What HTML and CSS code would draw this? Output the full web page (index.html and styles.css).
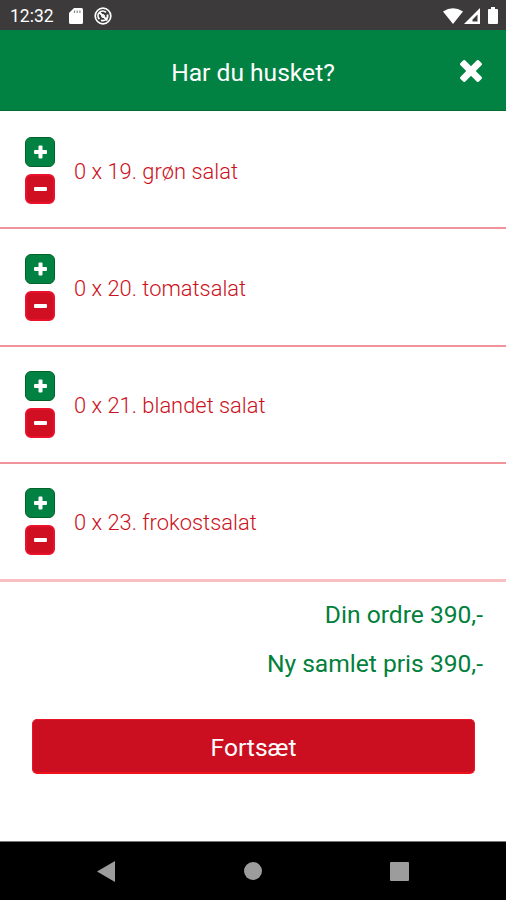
FILE: index.html
```html
<!DOCTYPE html>
<html lang="da">
<head>
    <meta charset="UTF-8">
    <meta name="viewport" content="width=device-width, initial-scale=1.0">
    <title>Har du husket?</title>
    <link rel="stylesheet" href="styles.css">
</head>
<body>
    <!-- Status bar -->
    <div class="status-bar">
        <span class="clock">12:32</span>
        <svg class="sd-icon" width="14" height="16" viewBox="0 0 14 16">
            <path fill="#fff" d="M5 0h7.5Q14 0 14 1.5v13q0 1.5-1.5 1.5h-11Q0 16 0 14.5V5z"/>
            <path stroke="#888" stroke-width="1.2" d="M5.5 2.5v2.500M8.200 2.500v2.500M10.900 2.500v2.500"/>
        </svg>
        <svg class="sync-icon" width="18" height="18" viewBox="0 0 18 18" fill="none" stroke="#fff">
            <circle cx="9" cy="9" r="7.800" stroke-width="1.700"/>
            <path stroke-width="1.800" d="M5.500 12.200A4.700 4.700 0 0 1 12 5.400M13.400 7.500A4.700 4.700 0 0 1 7 13.200M6 6l7.500 7.500"/>
            <circle cx="9" cy="9" r="1.500" stroke-width="1"/>
        </svg>
        <div class="status-right">
            <svg width="20" height="16" viewBox="0 0 20 16"><path fill="#fff" d="M0 3.500Q10-3 20 3.500L10 16z"/></svg>
            <svg width="16" height="16" viewBox="0 0 16 16"><path fill="#fff" fill-rule="evenodd" d="M16 0v16H0zM13.500 6.500L8.500 11.500V13.500h5z"/></svg>
            <svg class="battery" width="10" height="17" viewBox="0 0 10 17"><path fill="#fff" d="M3 0h4v2h2q1 0 1 1v13q0 1-1 1H1q-1 0-1-1V3q0-1 1-1h2z"/></svg>
        </div>
    </div>

    <!-- Header -->
    <header class="header">
        <h1>Har du husket?</h1>
        <button class="close" aria-label="Luk">
            <svg width="22" height="22" viewBox="0 0 22 22" fill="#fff">
                <rect x="-2" y="7.600" width="26" height="6.800" rx="1.600" transform="rotate(45 11 11)"/>
                <rect x="-2" y="7.600" width="26" height="6.800" rx="1.600" transform="rotate(-45 11 11)"/>
            </svg>
        </button>
    </header>

    <!-- Items -->
    <ul class="items">
        <li class="item">
            <div class="counter">
                <button class="plus" aria-label="Tilføj"></button>
                <button class="minus" aria-label="Fjern"></button>
            </div>
            <span class="item-name">0 x 19. grøn salat</span>
        </li>
        <li class="item">
            <div class="counter">
                <button class="plus" aria-label="Tilføj"></button>
                <button class="minus" aria-label="Fjern"></button>
            </div>
            <span class="item-name">0 x 20. tomatsalat</span>
        </li>
        <li class="item">
            <div class="counter">
                <button class="plus" aria-label="Tilføj"></button>
                <button class="minus" aria-label="Fjern"></button>
            </div>
            <span class="item-name">0 x 21. blandet salat</span>
        </li>
        <li class="item">
            <div class="counter">
                <button class="plus" aria-label="Tilføj"></button>
                <button class="minus" aria-label="Fjern"></button>
            </div>
            <span class="item-name">0 x 23. frokostsalat</span>
        </li>
    </ul>

    <!-- Totals -->
    <div class="totals">
        <p class="order-total">Din ordre 390,-</p>
        <p class="new-total">Ny samlet pris 390,-</p>
    </div>

    <button class="continue">Fortsæt</button>

    <!-- Navigation bar -->
    <nav class="nav-bar">
        <svg width="18" height="21" viewBox="0 0 18 21"><path fill="#9c9c9c" d="M18 0v21L0 10.500z"/></svg>
        <svg width="18" height="18" viewBox="0 0 18 18"><circle cx="9" cy="9" r="9" fill="#9c9c9c"/></svg>
        <svg width="19" height="19" viewBox="0 0 19 19"><rect width="19" height="19" rx="1" fill="#9c9c9c"/></svg>
    </nav>
</body>
</html>
```
FILE: styles.css
```css
* {
    box-sizing: border-box;
}

body {
    display: flex;
    flex-direction: column;
    height: 900px;
    margin: 0;
    background: #fff;
    font-family: Roboto, "Liberation Sans", sans-serif;
}

button {
    padding: 0;
    border: none;
    font-family: inherit;
    cursor: pointer;
}

svg {
    display: block;
}

/* Status bar */
.status-bar {
    display: flex;
    align-items: center;
    height: 30px;
    padding: 1px 8px 0 10px;
    background: #3c3a3b;
    color: #fff;
}

.clock {
    width: 59px;
    font-size: 17.5px;
}

.sync-icon {
    margin-left: 11px;
}

.status-right {
    display: flex;
    align-items: center;
    gap: 1px;
    margin-left: auto;
}

.battery {
    margin-left: 7px;
}

/* Header */
.header {
    display: grid;
    grid-template-columns: 1fr auto 1fr;
    align-items: center;
    height: 81px;
    padding: 5px 24px 0;
    background: #018242;
    border-bottom: 1px solid #016c2c;
    color: #fff;
}

.header h1 {
    grid-column: 2;
    margin: 0;
    font-size: 24.6px;
    font-weight: 400;
}

.close {
    justify-self: end;
    margin-bottom: 3px;
    background: none;
}

/* Items */
.items {
    margin: 0;
    padding: 1px 0 0;
    list-style: none;
}

.item {
    display: flex;
    align-items: center;
    height: 117.4px;
    padding: 1px 25px 0;
    border-bottom: 2px solid #f0939a;
}

.item:last-child {
    border-bottom: 3px solid #f8c0c3;
}

.counter {
    display: flex;
    flex-direction: column;
    gap: 7px;
    margin-right: 19px;
}

.plus,
.minus {
    display: grid;
    place-items: center;
    width: 30px;
    height: 30px;
    border-radius: 6px;
}

.plus {
    background: #018242;
    border: 1px solid #016327;
}

.minus {
    background: #d01022;
    border: 2px solid #e9112b;
}

.plus::before,
.plus::after,
.minus::before {
    content: "";
    grid-area: 1 / 1;
    width: 13px;
    height: 4px;
    border-radius: 1px;
    background: #fff;
}

.plus::after {
    transform: rotate(90deg);
}

.item-name {
    padding-top: 2px;
    color: #cb1121;
    font-size: 21.9px;
    font-weight: 300;
}

/* Totals */
.totals {
    padding: 18px 23px 0;
    color: #01803c;
    font-size: 24.6px;
    text-align: right;
}

.totals p {
    margin: 0 0 19px;
    line-height: 30px;
}

.continue {
    height: 55px;
    margin: 21px 31px 0 32px;
    padding-top: 3px;
    background: #cc0f20;
    border: 1px solid #e8142c;
    border-bottom: 2px solid #f0101c;
    border-radius: 5px;
    color: #fff;
    font-size: 24.6px;
}

/* Navigation bar */
.nav-bar {
    display: flex;
    align-items: center;
    justify-content: space-between;
    height: 59px;
    margin-top: auto;
    padding: 0 97px;
    background: #000;
    border-top: 1px solid #777;
}
```
